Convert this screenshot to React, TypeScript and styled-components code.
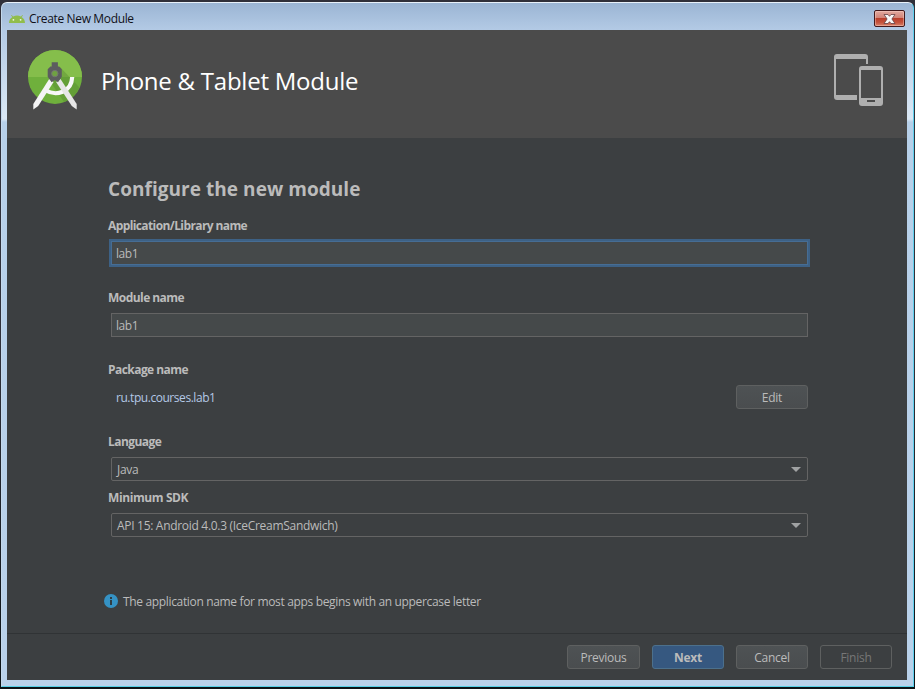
import React from "react";
import styled, { createGlobalStyle, css } from "styled-components";

const Global = createGlobalStyle`
  *, *::before, *::after { box-sizing: border-box; }
  html, body, #root { margin: 0; height: 100%; overflow: hidden; background: #16191c; }
  body { font-family: "Open Sans", "Noto Sans", sans-serif; font-size: 12px; color: #bbbbbb; }
  button, input { font-family: inherit; font-size: inherit; }
`;

const Desktop = styled.div`
  width: 915px;
  height: 689px;
  padding: 2px 1px 2px 1px;
  background: linear-gradient(#30303a 0 50%, #0b1216 100%);
`;

const Window = styled.div`
  display: flex;
  flex-direction: column;
  width: 913px;
  height: 685px;
  padding: 0 6px 6px 5px;
  border: 1px solid;
  border-color: #e8f1fa #5fd0ee #55cfe6 #c3d8ec;
  border-radius: 6px 6px 0 0;
  background: linear-gradient(#9bb5d4 0, #b3cae5 27px, #c2d5ea 60px, #dbe8f5 116px, #b7d0e9 119px, #b9d1ea 100%);
`;

const TitleBar = styled.div`
  display: flex;
  align-items: center;
  flex: 0 0 27px;
  padding: 4px 2px 0 2px;
`;

const TitleText = styled.span`
  flex: 1;
  margin-left: 4px;
  padding-top: 1px;
  color: #101018;
  font-size: 12px;
  letter-spacing: -0.35px;
  line-height: 18px;
`;

const CloseButton = styled.button`
  display: flex;
  align-items: center;
  justify-content: center;
  width: 31px;
  height: 17px;
  padding: 0;
  border: 1px solid #42191c;
  border-radius: 2px;
  background: linear-gradient(#e2a99f 0, #d28478 45%, #ba3f2c 50%, #c4513b 75%, #d8826a 100%);
  box-shadow: inset 0 0 0 1px rgba(255, 220, 210, 0.4);
`;

const Client = styled.div`
  display: flex;
  flex-direction: column;
  flex: 1;
  width: 900px;
  background: #3c3f41;
`;

const Header = styled.header`
  display: flex;
  align-items: flex-start;
  height: 108px;
  padding: 18px 24px 0 18px;
  background: #4b4b4b;
`;

const Heading = styled.h1`
  flex: 1;
  margin: 15px 0 0 16px;
  color: #ffffff;
  font-size: 24px;
  font-weight: 400;
  line-height: 36px;
  letter-spacing: -0.24px;
`;

const Form = styled.main`
  display: flex;
  flex-direction: column;
  flex: 1;
  padding: 34px 99px 0 101px;
`;

const SectionTitle = styled.h2`
  margin: 0 0 10px;
  font-size: 19px;
  font-weight: 700;
  line-height: 34px;
  letter-spacing: 0.05px;
`;

const Field = styled.div<{ $tight?: boolean }>`
  margin-bottom: ${(p) => (p.$tight ? 7 : 23)}px;
`;

const Label = styled.label<{ $spacing: number }>`
  display: block;
  margin-bottom: 5px;
  font-weight: 700;
  line-height: 20px;
  letter-spacing: ${(p) => p.$spacing}px;
`;

const Input = styled.input<{ $focused?: boolean }>`
  display: block;
  width: 697px;
  height: 24px;
  margin-left: 3px;
  padding: 1px 4px 0;
  border: 1px solid ${(p) => (p.$focused ? "#466d94" : "#646464")};
  border-radius: 0;
  outline: none;
  background: #45494a;
  color: #bbbbbb;
  letter-spacing: -0.45px;
  ${(p) => p.$focused && css`box-shadow: 0 0 0 2px #3d6185;`}
`;

const PackageRow = styled.div`
  display: flex;
  align-items: center;
  justify-content: space-between;
  height: 24px;
  padding-left: 8px;
`;

const PackageName = styled.span`
  color: #b4c8e6;
  line-height: 20px;
  letter-spacing: -0.45px;
  padding-top: 2px;
`;

const Select = styled.div`
  display: flex;
  align-items: center;
  justify-content: space-between;
  width: 697px;
  height: 24px;
  margin-left: 3px;
  padding: 1px 6px 0 5px;
  border: 1px solid #646464;
  border-radius: 2px;
  letter-spacing: -0.3px;
`;

const Info = styled.div`
  display: flex;
  align-items: center;
  height: 20px;
  margin: 31px 0 0 -4px;
  letter-spacing: -0.34px;
  span { margin-left: 5px; padding-top: 1px; }
`;

const Footer = styled.footer`
  display: flex;
  align-items: flex-start;
  justify-content: flex-end;
  gap: 12px;
  height: 47px;
  padding: 11px 15px 0;
  border-top: 1px solid #303335;
`;

const Button = styled.button<{ $kind?: "primary" | "disabled"; $wide?: boolean }>`
  width: ${(p) => (p.$wide ? 73 : 72)}px;
  height: 24px;
  padding: 1px 0 0;
  border: 1px solid #5e6060;
  border-radius: 3px;
  background: linear-gradient(#4e5254, #4a4d4f);
  color: #bbbbbb;
  letter-spacing: -0.25px;
  ${(p) => p.$kind === "primary" && css`
    border-color: #4c708c;
    background: #365880;
    font-weight: 700;
  `}
  ${(p) => p.$kind === "disabled" && css`
    background: transparent;
    color: #777777;
  `}
`;

const DevicesSlot = styled.div`
  display: flex;
  margin-top: 5px;
`;

const AndroidIcon = () => (
  <svg width="16" height="8" viewBox="0 0 16 8">
    <path d="M0 8A8 7.4 0 0 1 3.4 2L2 .4 2.5 0 4.2 1.5A9 9 0 0 1 11.8 1.5L13.5 0 14 .4 12.6 2A8 7.4 0 0 1 16 8Z" fill="#91bd4c" />
    <circle cx="4.4" cy="4.8" r=".9" fill="#f1f8e4" />
    <circle cx="11.6" cy="4.8" r=".9" fill="#f1f8e4" />
  </svg>
);

const StudioLogo = () => (
  <svg width="60" height="64" viewBox="25 48 60 64">
    <circle cx="55" cy="76.9" r="27" fill="#6fb03c" />
    <path d="M28 76.9A27 27 0 0 1 82 76.9Z" fill="#85be4b" />
    <path d="M60 67 79.5 87.5Q74 99 64 102L52 84Z" fill="#56862f" opacity=".4" />
    <path d="M45.5 90.3C56 96.5 71.6 92.5 72.2 77" fill="none" stroke="#f8f8f8" strokeWidth="4.2" />
    <path d="M49.2 79 53.6 82 38.2 106 33.3 109.5 33.3 104Z" fill="#f5f5f5" />
    <path d="M60.5 79 56.1 82 71.8 106 76.7 109.5 76.7 104Z" fill="#e6e6e6" />
    <path d="M51.7 62.3h6.2v4.2h1.3l2.6 2.7v7.5L58 82.3 54.8 80 51.6 82.3l-3.9-5.6v-7.5l2.7-2.7h1.3Z" fill="#5c5d5f" />
    <circle cx="54.8" cy="73.6" r="3.2" fill="#6fa142" stroke="#747673" strokeWidth="1" />
  </svg>
);

const DevicesIcon = () => (
  <svg width="50" height="54" viewBox="833 53 50 54">
    <path fillRule="evenodd" d="M837 54H865Q868 54 868 57V64H866V59H836V95H857V100H837Q834 100 834 97V57Q834 54 837 54Z" fill="#afafaf" />
    <path fillRule="evenodd" d="M862 66H880Q883 66 883 69V103Q883 106 880 106H862Q859 106 859 103V69Q859 66 862 66ZM861 70V98H881V70ZM867 100V102H875V100Z" fill="#afafaf" />
  </svg>
);

const InfoIcon = () => (
  <svg width="14" height="14" viewBox="0 0 14 14">
    <circle cx="7" cy="7" r="7" fill="#3592c4" />
    <path d="M6 3h2v2H6ZM6 6h2v5H6Z" fill="#303c42" />
  </svg>
);

const CloseIcon = () => (
  <svg width="13" height="10" viewBox="0 0 13 10">
    <path d="M1 .5H5L6.5 2.3 8 .5H12L8.9 5 12 9.5H8L6.5 7.7 5 9.5H1L4.1 5Z" fill="#f8f8f8" stroke="#644044" strokeWidth=".8" />
  </svg>
);

const Arrow = () => (
  <svg width="10" height="5" viewBox="0 0 10 5">
    <path d="M0 0H10L5 5Z" fill="#a0a2a3" />
  </svg>
);

export default function App() {
  return (
    <>
      <Global />
      <Desktop>
        <Window>
          <TitleBar>
            <AndroidIcon />
            <TitleText>Create New Module</TitleText>
            <CloseButton aria-label="Close"><CloseIcon /></CloseButton>
          </TitleBar>
          <Client>
            <Header>
              <StudioLogo />
              <Heading>Phone &amp; Tablet Module</Heading>
              <DevicesSlot><DevicesIcon /></DevicesSlot>
            </Header>
            <Form>
              <SectionTitle>Configure the new module</SectionTitle>
              <Field>
                <Label $spacing={-0.6}>Application/Library name</Label>
                <Input $focused defaultValue="lab1" />
              </Field>
              <Field>
                <Label $spacing={-0.55}>Module name</Label>
                <Input defaultValue="lab1" />
              </Field>
              <Field>
                <Label $spacing={-0.55}>Package name</Label>
                <PackageRow>
                  <PackageName>ru.tpu.courses.lab1</PackageName>
                  <Button>Edit</Button>
                </PackageRow>
              </Field>
              <Field $tight>
                <Label $spacing={-0.55}>Language</Label>
                <Select>Java<Arrow /></Select>
              </Field>
              <Field>
                <Label $spacing={-0.4}>Minimum SDK</Label>
                <Select>API 15: Android 4.0.3 (IceCreamSandwich)<Arrow /></Select>
              </Field>
              <Info>
                <InfoIcon />
                <span>The application name for most apps begins with an uppercase letter</span>
              </Info>
            </Form>
            <Footer>
              <Button $wide>Previous</Button>
              <Button $kind="primary">Next</Button>
              <Button>Cancel</Button>
              <Button $kind="disabled" disabled>Finish</Button>
            </Footer>
          </Client>
        </Window>
      </Desktop>
    </>
  );
}
